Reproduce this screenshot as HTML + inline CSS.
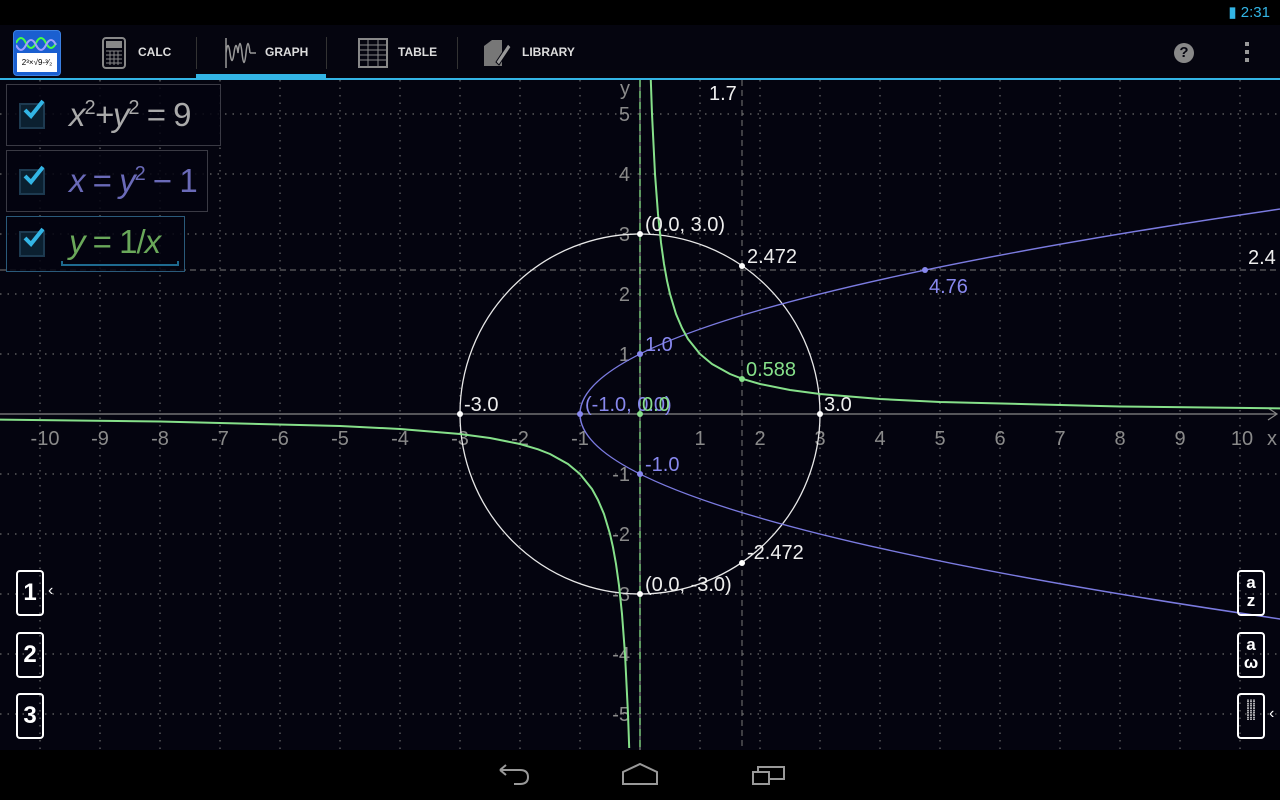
<!DOCTYPE html>
<html><head><meta charset="utf-8"><style>
body{margin:0;width:1280px;height:800px;background:#04040f;overflow:hidden;font-family:"Liberation Sans",sans-serif;position:relative}
.abs{position:absolute}
.tab{position:absolute;top:25px;height:54px;color:#ddd;font-weight:bold;font-size:12px;line-height:54px}
.sep{position:absolute;top:37px;width:1px;height:32px;background:#333}
.eq{position:absolute;border:1px solid #3a3a44;background:rgba(4,4,15,0.85)}
.cb{position:absolute;left:12px;width:22px;height:22px;border:2px solid #1d3a50;background:#0b2030}
.eqt{position:absolute;font-family:"Liberation Sans",sans-serif;font-style:italic;font-size:33px;letter-spacing:-1px}
.kb{position:absolute;width:24px;height:42px;border:2px solid #fff;border-radius:4px;color:#fff;font-weight:bold;font-size:24px;text-align:center;line-height:42px}
</style></head><body>
<div class="abs" style="left:0;top:0;width:1280px;height:25px;background:#000"></div>
<div class="abs" style="right:10px;top:3px;color:#33b5e5;font-size:15px">▮ 2:31</div>
<div class="abs" style="left:0;top:25px;width:1280px;height:54px;background:#05050f"></div>
<div class="abs" style="left:0;top:78px;width:1280px;height:2px;background:#33b5e5"></div>
<div class="abs" style="left:196px;top:74px;width:130px;height:5px;background:#33b5e5"></div>
<div class="abs" style="left:13px;top:30px;width:46px;height:44px;background:#1a5fd0;border-radius:4px;border:1px solid #3b7fe0">
<div class="abs" style="left:3px;top:22px;width:40px;height:19px;background:#fff;font-size:8px;color:#000;text-align:center;line-height:19px">2³×√9-³⁄₂</div>
<svg class="abs" style="left:2px;top:2px" width="42" height="20"><path d="M0 10 Q5 0 10 10 T20 10 T30 10 T40 10" stroke="#4f4" fill="none" stroke-width="2"/><path d="M0 12 Q5 22 10 12 T20 12 T30 12 T40 12" stroke="#a0a0ff" fill="none" stroke-width="2"/></svg></div>
<svg class="abs" style="left:102px;top:37px" width="24" height="32"><rect x="1" y="1" width="22" height="30" rx="3" fill="none" stroke="#888" stroke-width="2"/><rect x="4" y="4" width="16" height="7" fill="#888"/><path d="M4 14h16M4 18h16M4 22h16M4 26h16M8 14v14M12 14v14M16 14v14" stroke="#888"/></svg>
<div class="tab" style="left:138px">CALC</div>
<div class="sep" style="left:196px"></div>
<svg class="abs" style="left:224px;top:36px" width="34" height="34"><path d="M2 17 Q4 2 6 17 T10 17 T14 17 Q16 -2 18 17 T22 17 T26 17 M26 17h6 M2 2v30" stroke="#999" fill="none" stroke-width="1.5"/></svg>
<div class="tab" style="left:265px">GRAPH</div>
<div class="sep" style="left:326px"></div>
<svg class="abs" style="left:358px;top:38px" width="30" height="30"><rect x="1" y="1" width="28" height="28" fill="none" stroke="#888" stroke-width="2"/><path d="M1 7h28M1 12h28M1 17h28M1 22h28M10 1v28M20 1v28" stroke="#888"/></svg>
<div class="tab" style="left:398px">TABLE</div>
<div class="sep" style="left:457px"></div>
<svg class="abs" style="left:482px;top:38px" width="30" height="30"><path d="M2 8 L10 2 H20 V28 H2Z" fill="#777"/><path d="M14 24 L26 6 L29 9 L17 27Z" fill="#999" stroke="#05050f"/></svg>
<div class="tab" style="left:522px">LIBRARY</div>
<div class="abs" style="left:1174px;top:43px;width:20px;height:20px;border-radius:50%;background:#888;color:#05050f;font-weight:bold;font-size:15px;text-align:center;line-height:20px">?</div>
<div class="abs" style="left:1245px;top:42px;width:4px;height:4px;background:#999;box-shadow:0 8px #999,0 16px #999"></div>

<svg class="abs" style="left:0;top:80px" width="1280" height="670" viewBox="0 80 1280 670">
<rect x="0" y="80" width="1280" height="670" fill="#04040f"/>
<g stroke="#6a6a6a" stroke-width="1.2" stroke-dasharray="1.5 6">
<path d="M40 80V750M100 80V750M160 80V750M220 80V750M280 80V750M340 80V750M400 80V750M460 80V750M520 80V750M580 80V750M700 80V750M760 80V750M820 80V750M880 80V750M940 80V750M1000 80V750M1060 80V750M1120 80V750M1180 80V750M1240 80V750"/>
<path d="M0 114H1280M0 174H1280M0 234H1280M0 294H1280M0 354H1280M0 474H1280M0 534H1280M0 594H1280M0 654H1280M0 714H1280"/>
</g>
<g stroke="#777" stroke-width="1" stroke-dasharray="6 4"><path d="M742 80V750"/><path d="M0 270H1280"/></g>
<path d="M0 414H1276M1268 408L1277 414L1268 420M640 80V750" stroke="#888" stroke-width="1.2" fill="none"/>
<path d="M640 80V750" stroke="#7fdc7f" stroke-width="1.3" stroke-dasharray="7 4"/>
<g fill="#8a8a8a" font-size="20" text-anchor="middle">
<text x="45" y="445">-10</text><text x="100" y="445">-9</text><text x="160" y="445">-8</text><text x="220" y="445">-7</text><text x="280" y="445">-6</text><text x="340" y="445">-5</text><text x="400" y="445">-4</text><text x="460" y="445">-3</text><text x="520" y="445">-2</text><text x="580" y="445">-1</text><text x="700" y="445">1</text><text x="760" y="445">2</text><text x="820" y="445">3</text><text x="880" y="445">4</text><text x="940" y="445">5</text><text x="1000" y="445">6</text><text x="1060" y="445">7</text><text x="1120" y="445">8</text><text x="1180" y="445">9</text><text x="1242" y="445">10</text><text x="1272" y="445">x</text>
</g>
<g fill="#8a8a8a" font-size="20" text-anchor="end">
<text x="630" y="95">y</text><text x="630" y="121">5</text><text x="630" y="181">4</text><text x="630" y="241">3</text><text x="630" y="301">2</text><text x="630" y="361">1</text><text x="630" y="481">-1</text><text x="630" y="541">-2</text><text x="630" y="601">-3</text><text x="630" y="661">-4</text><text x="630" y="721">-5</text>
</g>
<circle cx="640" cy="414" r="180" fill="none" stroke="#e8e8e8" stroke-width="1.3"/>
<path d="M1294 207 Q-134 414 1294 621" fill="none" stroke="#7b7be0" stroke-width="1.5"/>
<g fill="none" stroke="#86e08a" stroke-width="2" stroke-linejoin="round">
<path d="M650.8 80 L652 114 L655 174 L658 214 L661 242.6 L664 264 L667 280.7 L670 294 L676 314 L682 328 L688 339 L700 354 L712 364 L730 374 L742 378.7 L760 384 L790 390 L820 394 L880 399 L940 402 L1120 406.5 L1282 408.4"/>
<g transform="rotate(180 640 414)"><path d="M650.8 80 L652 114 L655 174 L658 214 L661 242.6 L664 264 L667 280.7 L670 294 L676 314 L682 328 L688 339 L700 354 L712 364 L730 374 L742 378.7 L760 384 L790 390 L820 394 L880 399 L940 402 L1120 406.5 L1282 408.4"/></g>
</g>
<g fill="#fff"><circle cx="640" cy="234" r="3"/><circle cx="742" cy="266" r="3"/><circle cx="460" cy="414" r="3"/><circle cx="820" cy="414" r="3"/><circle cx="742" cy="563" r="3"/><circle cx="640" cy="594" r="3"/></g>
<g fill="#8888ee"><circle cx="925" cy="270" r="3"/><circle cx="640" cy="354" r="3"/><circle cx="580" cy="414" r="3"/><circle cx="640" cy="474" r="3"/></g>
<g fill="#86e08a"><circle cx="742" cy="379" r="3"/><circle cx="640" cy="414" r="3"/></g>
<g font-size="20" fill="#eee">
<text x="709" y="100">1.7</text><text x="645" y="231">(0.0, 3.0)</text><text x="747" y="263">2.472</text><text x="1248" y="264">2.4</text><text x="464" y="411">-3.0</text><text x="824" y="411">3.0</text><text x="747" y="559">-2.472</text><text x="645" y="591">(0.0, -3.0)</text>
</g>
<g font-size="20" fill="#8888ee"><text x="929" y="293">4.76</text><text x="645" y="351">1.0</text><text x="585" y="411">(-1.0, 0.0)</text><text x="645" y="471">-1.0</text></g>
<g font-size="20" fill="#86e08a"><text x="746" y="376">0.588</text><text x="642" y="411">0.0</text></g>
</svg>

<svg width="0" height="0" style="position:absolute"><defs><path id="ck" d="M4 11 L10 17 L22 2" stroke="#33b5e5" stroke-width="4" fill="none"/></defs></svg>
<div class="eq" style="left:6px;top:84px;width:213px;height:60px"><div class="cb" style="top:18px"></div><svg class="abs" style="left:14px;top:14px" width="26" height="24"><use href="#ck"/></svg><div class="eqt" style="left:62px;top:11px;color:#aaa">x<sup style="font-size:20px;font-style:normal">2</sup>+y<sup style="font-size:20px;font-style:normal">2</sup><span style="font-style:normal"> = 9</span></div></div>
<div class="eq" style="left:6px;top:150px;width:200px;height:60px"><div class="cb" style="top:18px"></div><svg class="abs" style="left:14px;top:14px" width="26" height="24"><use href="#ck"/></svg><div class="eqt" style="left:62px;top:11px;color:#6a6ab8">x<span style="font-style:normal"> = </span>y<sup style="font-size:20px;font-style:normal">2</sup><span style="font-style:normal"> − 1</span></div></div>
<div class="eq" style="left:6px;top:216px;width:177px;height:54px;border-color:#2a5a7a"><div class="cb" style="top:14px"></div><svg class="abs" style="left:14px;top:10px" width="26" height="24"><use href="#ck"/></svg><div class="eqt" style="left:62px;top:6px;color:#6aa85a">y<span style="font-style:normal"> = 1/</span>x</div><div class="abs" style="left:54px;top:44px;width:114px;height:3px;border:2px solid #1e6a90;border-top:none"></div></div>

<div class="kb" style="left:16px;top:570px">1</div><div class="abs" style="left:48px;top:582px;color:#fff;font-size:16px">‹</div>
<div class="kb" style="left:16px;top:632px">2</div>
<div class="kb" style="left:16px;top:693px">3</div>
<div class="kb" style="left:1237px;top:570px;font-size:17px;line-height:18px;padding-top:2px;height:40px">a<br>z</div>
<div class="kb" style="left:1237px;top:632px;font-size:17px;line-height:18px;padding-top:2px;height:40px">a<br>ω</div>
<div class="kb" style="left:1237px;top:693px;font-size:9px;line-height:7px;padding-top:5px;height:37px">⁞⁞⁞<br>⁞⁞⁞<br>⁞⁞⁞</div><div class="abs" style="left:1269px;top:705px;color:#fff;font-size:16px">‹</div>

<div class="abs" style="left:0;top:750px;width:1280px;height:50px;background:#000"></div>
<svg class="abs" style="left:490px;top:762px" width="300" height="28"><path d="M10 8 H30 Q38 8 38 15 Q38 22 30 22 H24 M10 8 L16 3 M10 8 L16 13" stroke="#999" stroke-width="2" fill="none"/><path d="M133 22 V10 L150 2 L167 10 V22Z" stroke="#999" stroke-width="2" fill="none"/><rect x="263" y="10" width="16" height="12" stroke="#999" stroke-width="2" fill="none"/><path d="M268 10 V5 H294 V17 H279" stroke="#999" stroke-width="2" fill="none"/></svg>
</body></html>
